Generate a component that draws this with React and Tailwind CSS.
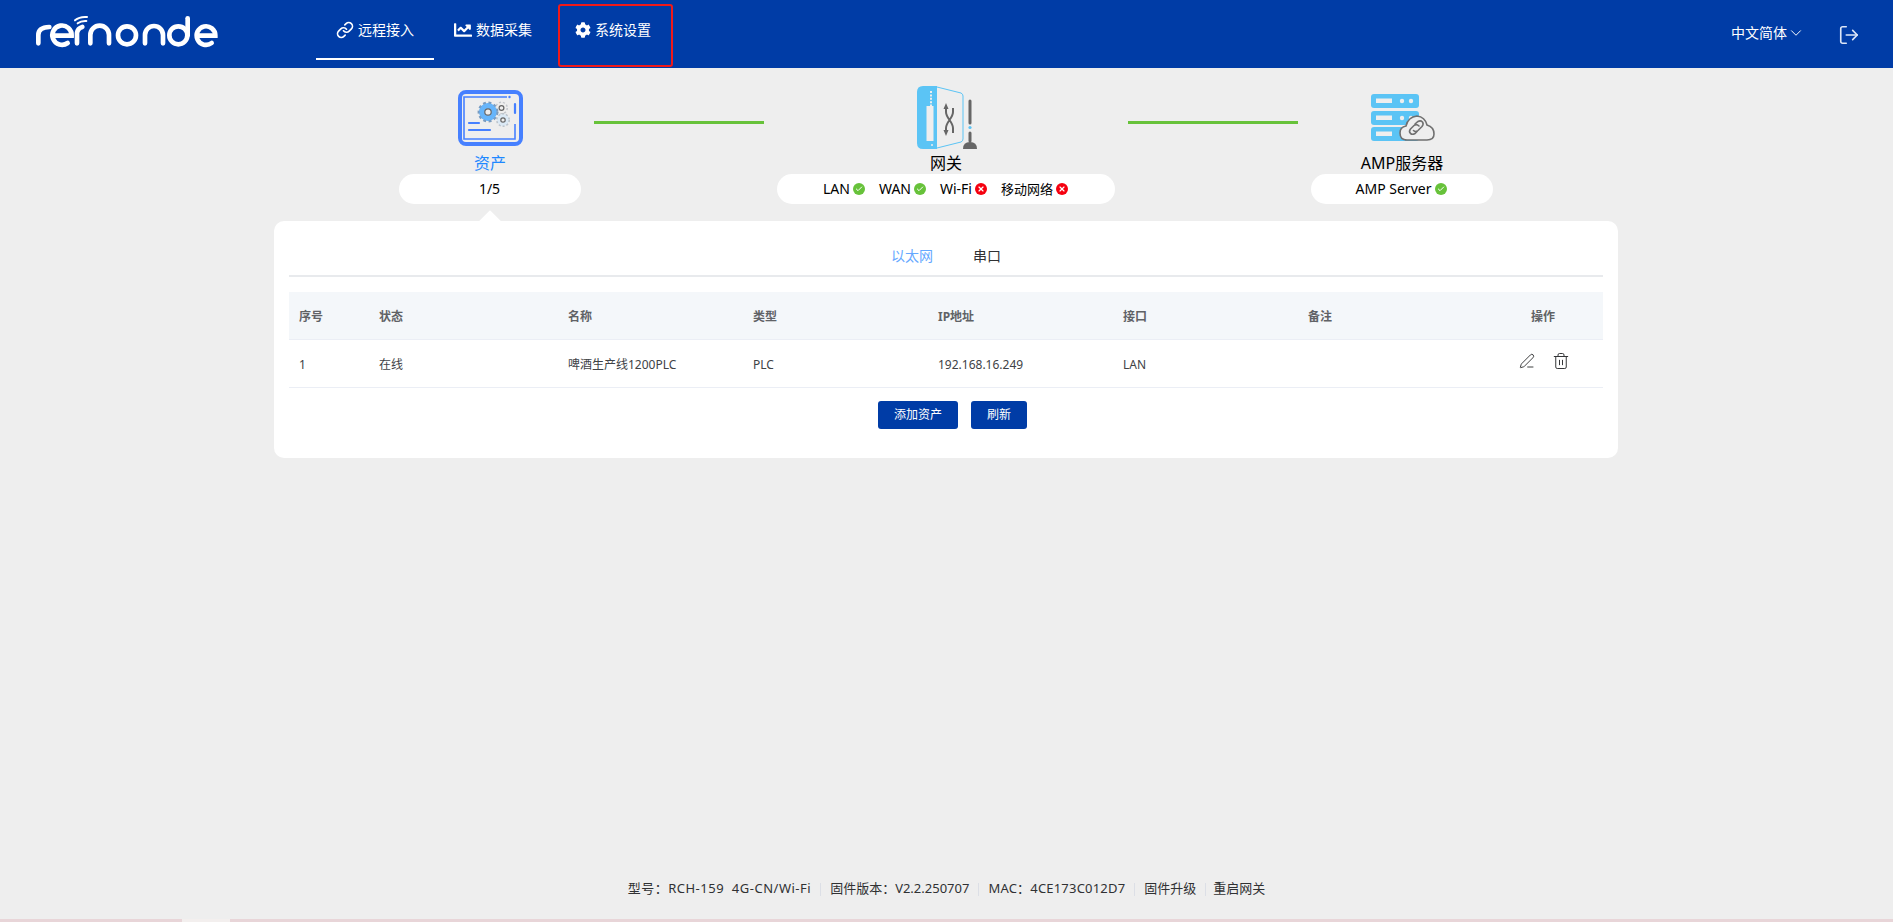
import React from "react";
import { Link, ChevronDown, LogOut, PenLine, Trash2, Check, X } from "lucide-react";
import { FaChartLine, FaCog } from "react-icons/fa";

const navItems = [
  { label: "远程接入", icon: <Link size={18} strokeWidth={2.2} />, active: true },
  { label: "数据采集", icon: <FaChartLine size={18} /> },
  { label: "系统设置", icon: <FaCog size={16} />, marked: true },
];

const gatewayStatus = [
  { label: "LAN", ok: true },
  { label: "WAN", ok: true },
  { label: "Wi-Fi", ok: false },
  { label: "移动网络", ok: false },
];

const columns = ["序号", "状态", "名称", "类型", "IP地址", "接口", "备注"];
const row = ["1", "在线", "啤酒生产线1200PLC", "PLC", "192.168.16.249", "LAN", ""];

const gridCols = "grid grid-cols-[80px_189px_185px_185px_185px_185px_185px_120px]";

const Logo = () => (
  <svg width="210" height="55" viewBox="0 0 630 165" fill="none" stroke="#fff" strokeWidth="14" strokeLinecap="round">
    <path d="M52 115V90Q52 67 85 66" />
    <path d="M96 92H152A29 29 0 1 0 140 114" />
    <path d="M168 115V84Q170 70 184 66" />
    <path d="M170 55Q180 47 196 48" strokeWidth="6" />
    <path d="M162 46Q176 34 198 36" strokeWidth="6" />
    <path d="M208 115V90A28 28 0 0 1 264 90V115" />
    <circle cx="318" cy="91" r="27" />
    <path d="M372 115V90A27 27 0 0 1 426 90V115" />
    <circle cx="472" cy="91" r="27" />
    <path d="M500 40V91" />
    <path d="M527 92H583A28 28 0 1 0 572 114" />
  </svg>
);

const Gear = ({ cx, cy, r, fill, stroke, tooth, hole }) => (
  <g>
    <circle cx={cx} cy={cy} r={r} fill={fill} stroke={stroke} strokeWidth={tooth} strokeDasharray={`${tooth} ${tooth * 0.9}`} />
    <circle cx={cx} cy={cy} r={r - 0.5} fill={fill} />
    <circle cx={cx} cy={cy} r={hole} fill="#eee" stroke="#666" strokeWidth="1.2" />
  </g>
);

const AssetIcon = () => (
  <svg width="65" height="56" viewBox="0 0 65 56" fill="none">
    <rect x="2" y="2" width="61" height="52" rx="6" stroke="#4680ff" strokeWidth="4" />
    <path d="M49 7H6V49H57V34" stroke="#4680ff" strokeWidth="1.6" />
    <circle cx="51.5" cy="7" r="1.2" fill="#4680ff" />
    <path d="M57 14V23" stroke="#4680ff" strokeWidth="2.2" strokeLinecap="round" />
    <path d="M11 33H21M11 40H32" stroke="#4680ff" strokeWidth="2.2" strokeLinecap="round" />
    <Gear cx={43.5} cy={18} r={5.5} fill="#eee" stroke="#c4c7cc" tooth={2} hole={2.4} />
    <Gear cx={45} cy={30} r={6} fill="#dbe9f5" stroke="#bcc4cc" tooth={2} hole={2.2} />
    <Gear cx={30} cy={22} r={9} fill="#66b5fb" stroke="#7a9cc0" tooth={2.8} hole={3.2} />
  </svg>
);

const GatewayIcon = () => (
  <svg width="60" height="63" viewBox="0 0 60 63" fill="none">
    <path d="M20 1L44 7Q46 8 46 10V53Q46 55 44 56L20 62" stroke="#5bc4f5" strokeWidth="1" />
    <path d="M6 0H20V63H6Q0 63 0 57V6Q0 0 6 0Z" fill="#5bc4f5" />
    <rect x="9.5" y="20" width="7" height="35" fill="#eee" />
    <path d="M14 5V20" stroke="#eee" strokeWidth="2" strokeDasharray="2 1.4" />
    <circle cx="15" cy="59" r="1" fill="#eee" />
    <path d="M29 22V26C29 32 36 36 36 42V47M36 22V26C36 32 29 36 29 42V47" stroke="#666" strokeWidth="2" />
    <path d="M29 17L26.5 23H31.5ZM29 50L26.5 44H31.5Z" fill="#666" />
    <path d="M53 15V37M53 47V55" stroke="#666" strokeWidth="3" strokeLinecap="round" />
    <circle cx="53" cy="41.5" r="1.6" fill="#5bc4f5" />
    <path d="M46 63Q46 56 53 56Q60 56 60 63Z" fill="#666" />
  </svg>
);

const ServerIcon = () => (
  <svg width="64" height="48" viewBox="0 0 64 48" fill="none">
    {[0, 17, 33].map((y) => (
      <g key={y}>
        <rect x="0" y={y} width="48" height="14" rx="3" fill="#5bc4f5" />
        <rect x="5" y={y + 4.5} width="16" height="4.5" fill="#eee" />
        <circle cx="31" cy={y + 7} r="2.2" fill="#eee" />
        <circle cx="40" cy={y + 7} r="2.2" fill="#eee" />
      </g>
    ))}
    <path d="M34 46H36Q29 46 29 39Q29 33 35 32Q37 23 46 22Q54 23 56 31Q63 33 63 40Q63 46 56 46Z" fill="#eee" stroke="#707070" strokeWidth="1.6" />
    <path d="M44 30L47 27.5Q49.5 26 51.5 28Q53 30 51 32.5L47 36.5Q44.5 38.5 42.5 36.5" stroke="#707070" strokeWidth="1.6" strokeLinecap="round" />
    <path d="M48 32Q45.5 29.5 43 31.5L39.5 35Q37.5 37.5 39.5 39.5Q41.5 41 44 39.5L46 37.5" stroke="#707070" strokeWidth="1.6" strokeLinecap="round" />
  </svg>
);

const Status = ({ ok }) => (
  <span className={`flex h-3 w-3 items-center justify-center rounded-full ${ok ? "bg-[#67c23a]" : "bg-[#f5000f]"}`}>
    {ok ? <Check size={8} color="#fff" strokeWidth={3} /> : <X size={8} color="#fff" strokeWidth={3.5} />}
  </span>
);

const Node = ({ icon, label, labelClass, width, children }) => (
  <div className={`flex flex-col items-center ${width}`}>
    <div className="ml-[2px] flex h-[63px] items-center">{icon}</div>
    <div className={`ml-[1px] h-[25px] pt-[3px] text-base leading-[22px] ${labelClass}`}>{label}</div>
    <div className="flex h-[30px] w-full items-center justify-center rounded-full bg-white text-sm text-black">
      {children}
    </div>
  </div>
);

const Connector = () => <div className="mx-[13px] mt-[35px] h-[2.5px] w-[170px] bg-[#67c23a]" />;

const FooterSep = () => <span className="mx-[9px] h-[13px] w-px bg-[#dcdfe6]" />;

export default function App() {
  return (
    <div className="flex min-h-screen flex-col bg-[#eeeeee] font-['Noto_Sans','Noto_Sans_CJK_SC',sans-serif]">
      {/* header */}
      <header className="flex h-[68px] items-center bg-[#003ca6] text-white">
        <div className="mb-[3px] ml-[21px] w-[295px]">
          <Logo />
        </div>
        <nav className="flex h-full">
          {navItems.map((item) => (
            <div
              key={item.label}
              className={`relative flex h-full items-center gap-[4px] px-5 pb-[9px] text-sm ${
                item.active ? "after:absolute after:inset-x-0 after:bottom-[8px] after:h-[2px] after:bg-white" : ""
              } ${item.marked ? "ml-[3px]" : ""}`}
            >
              {item.icon}
              <span>{item.label}</span>
              {item.marked && (
                <span className="absolute -right-[2px] bottom-[1px] left-[3px] top-[4px] rounded-[3px] border-2 border-[#f01919]" />
              )}
            </div>
          ))}
        </nav>
        <div className="ml-auto flex items-center pb-[3px] text-sm">
          <span>中文简体</span>
          <ChevronDown size={18} strokeWidth={1.3} />
        </div>
        <LogOut size={22} strokeWidth={1.8} className="ml-[33px] mr-[33px] mt-[2px] text-[#dce6f7]" />
      </header>

      {/* topology */}
      <div className="flex justify-center pr-[2px] pt-[18px]">
        <Node icon={<AssetIcon />} label="资产" labelClass="text-[#1e88ff]" width="w-[182px]">
          1/5
        </Node>
        <Connector />
        <Node icon={<GatewayIcon />} label="网关" labelClass="text-black" width="w-[338px]">
          <div className="flex items-center">
            {gatewayStatus.map((s) => (
              <div key={s.label} className="flex items-center gap-[3px] pr-[14px] last:pr-0 last:text-[13px]">
                <span>{s.label}</span>
                <Status ok={s.ok} />
              </div>
            ))}
          </div>
        </Node>
        <Connector />
        <Node icon={<ServerIcon />} label="AMP服务器" labelClass="text-black" width="w-[182px]">
          <div className="flex items-center gap-[4px]">
            <span>AMP Server</span>
            <Status ok />
          </div>
        </Node>
      </div>

      {/* assets card */}
      <div className="relative ml-[274px] mt-[17px] w-[1344px] rounded-[10px] bg-white px-[15px] pb-[29px]">
        <span className="absolute -top-[7px] left-[207px] h-[18px] w-[18px] rotate-45 bg-white" />
        <div className="relative flex h-[56px] items-center justify-center border-b-2 border-[#e8eaed] pt-[16px] text-sm">
          <span className="px-5 text-[#66a8ff]">以太网</span>
          <span className="px-5 text-[#303133]">串口</span>
        </div>

        <div className={`${gridCols} mt-[15px] h-[48px] items-center border-b border-[#ebeef5] bg-[#f4f7fa] pt-[2px] text-xs font-bold text-[#606266]`}>
          {columns.map((c) => (
            <div key={c} className="px-[10px]">
              {c}
            </div>
          ))}
          <div className="text-center">操作</div>
        </div>
        <div className={`${gridCols} h-[48px] items-center border-b border-[#ebeef5] pt-[2px] text-xs text-[#404246]`}>
          {row.map((c, i) => (
            <div key={i} className="px-[10px]">
              {c}
            </div>
          ))}
          <div className="flex -translate-y-[4px] items-center justify-center gap-[17px] pl-[2px] text-[#303133]">
            <PenLine size={16} strokeWidth={1.4} />
            <Trash2 size={18} strokeWidth={1.3} />
          </div>
        </div>

        <div className="mt-[13px] flex justify-center gap-[13px] pl-[13px]">
          <button className="h-[28px] w-[80px] rounded-[3px] bg-[#003ca6] text-xs text-white">添加资产</button>
          <button className="h-[28px] w-[56px] rounded-[3px] bg-[#003ca6] text-xs text-white">刷新</button>
        </div>
      </div>

      {/* footer */}
      <footer className="mt-auto flex h-[60px] items-center justify-center text-[13px] text-[#303133]">
        <span className="tracking-[0.5px]">型号：RCH-159&nbsp;&nbsp;4G-CN/Wi-Fi</span>
        <FooterSep />
        <span>固件版本：V2.2.250707</span>
        <FooterSep />
        <span className="tracking-[0.2px]">MAC：4CE173C012D7</span>
        <FooterSep />
        <span>固件升级</span>
        <FooterSep />
        <span className="-ml-[2px]">重启网关</span>
      </footer>
      <div className="flex h-[3px] bg-[#e8d5d8]">
        <span className="ml-[182px] w-[48px] bg-[#f3efee]" />
      </div>
    </div>
  );
}
